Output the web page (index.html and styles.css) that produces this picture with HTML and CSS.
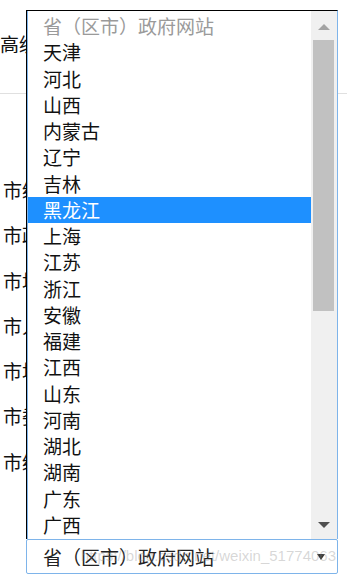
FILE: index.html
```html
<!DOCTYPE html>
<html lang="zh-CN">
<head>
    <meta charset="UTF-8">
    <meta name="viewport" content="width=device-width, initial-scale=1.0">
    <title>政府网站导航</title>
    <link rel="stylesheet" href="styles.css">
</head>
<body>
    <div class="page">
        <div class="search-head">高级</div>
        <ul class="site-rows">
            <li>市级</li>
            <li>市政</li>
            <li>市场</li>
            <li>市人</li>
            <li>市场</li>
            <li>市委</li>
            <li>市级</li>
        </ul>
    </div>

    <div class="dropdown">
        <div class="options">
            <ul class="option-list">
                <li class="option placeholder">省（区市）政府网站</li>
                <li class="option">天津</li>
                <li class="option">河北</li>
                <li class="option">山西</li>
                <li class="option">内蒙古</li>
                <li class="option">辽宁</li>
                <li class="option">吉林</li>
                <li class="option selected">黑龙江</li>
                <li class="option">上海</li>
                <li class="option">江苏</li>
                <li class="option">浙江</li>
                <li class="option">安徽</li>
                <li class="option">福建</li>
                <li class="option">江西</li>
                <li class="option">山东</li>
                <li class="option">河南</li>
                <li class="option">湖北</li>
                <li class="option">湖南</li>
                <li class="option">广东</li>
                <li class="option">广西</li>
            </ul>
            <div class="scrollbar">
                <div class="scroll-btn up"><span class="arrow-up"></span></div>
                <div class="thumb"></div>
                <div class="scroll-space"></div>
                <div class="scroll-btn down"><span class="arrow-down"></span></div>
            </div>
        </div>
        <div class="select-box">
            <span class="select-value">省（区市）政府网站</span>
            <span class="caret"></span>
            <span class="watermark">https://blog.csdn.net/weixin_51774063</span>
        </div>
    </div>
</body>
</html>
```

FILE: styles.css
```css
:root {
    --text-color: #111;
    --hint-color: #9a9a9a;
    --line-color: #e0e0e0;
    --focus-blue: #7eb4ea;
    --select-blue: #1e90ff;
    --track-color: #f0f0f0;
    --thumb-color: #c1c1c1;
}

body {
    margin: 0;
    background: #fff;
    font-family: "Noto Sans CJK SC", "Noto Sans", sans-serif;
    color: var(--text-color);
    overflow: hidden;
}

ul {
    list-style: none;
    margin: 0;
    padding: 0;
}

.page {
    width: 347px;
    height: 579px;
}

/* page behind the open list */
.search-head {
    height: 60px;
    padding-top: 33px;
    line-height: 22px;
    font-size: 19px;
    border-bottom: 1px solid var(--line-color);
}

.site-rows {
    padding-top: 73px;
    padding-left: 3px;
}

.site-rows li {
    height: 45.3px;
    line-height: 45.3px;
    font-size: 19px;
    white-space: nowrap;
}

.dropdown {
    position: absolute;
    top: 10px;
    left: 26px;
    width: 312px;
}

.options {
    display: flex;
    height: 528px;
    background: #fff;
    border-top: 1px solid #000;
    border-left: 1px solid #000;
    border-right: 1px solid var(--focus-blue);
    box-shadow: inset 1px 0 0 var(--focus-blue);
}

.option-list {
    flex: 1;
    padding-top: 2px;
    padding-left: 1px;
}

.option {
    height: 26.25px;
    line-height: 26.25px;
    padding-left: 15px;
    font-size: 19px;
    white-space: nowrap;
}

.option.placeholder {
    color: var(--hint-color);
}

.option.selected {
    background: var(--select-blue);
    color: #fff;
}

.scrollbar {
    width: 26px;
    display: flex;
    flex-direction: column;
    background: var(--track-color);
}

.scroll-btn {
    display: flex;
    justify-content: center;
    align-items: center;
    padding-right: 1px;
}

.scroll-btn.up {
    height: 26px;
    padding-top: 3px;
}

.scroll-btn.down {
    height: 28px;
}

.arrow-up {
    width: 0;
    height: 0;
    border-left: 6px solid transparent;
    border-right: 6px solid transparent;
    border-bottom: 6px solid #a3a3a3;
}

.arrow-down {
    width: 0;
    height: 0;
    border-left: 6px solid transparent;
    border-right: 6px solid transparent;
    border-top: 6px solid #505050;
}

.thumb {
    height: 271px;
    margin: 0 3px 0 2px;
    background: var(--thumb-color);
}

.scroll-space {
    flex: 1;
}

.select-box {
    position: relative;
    display: flex;
    align-items: center;
    height: 33px;
    padding-left: 16px;
    padding-right: 12px;
    border: 1px solid var(--focus-blue);
    border-radius: 2px;
    background: #fff;
}

.select-value {
    flex: 1;
    font-size: 19px;
    color: #222;
    white-space: nowrap;
}

.caret {
    width: 0;
    height: 0;
    border-left: 4px solid transparent;
    border-right: 4px solid transparent;
    border-top: 6px solid #333;
}

.watermark {
    position: absolute;
    right: 1px;
    top: 7px;
    font-family: "Liberation Sans", Arial, sans-serif;
    font-size: 15px;
    color: rgba(140, 140, 140, 0.35);
    white-space: nowrap;
}
```
